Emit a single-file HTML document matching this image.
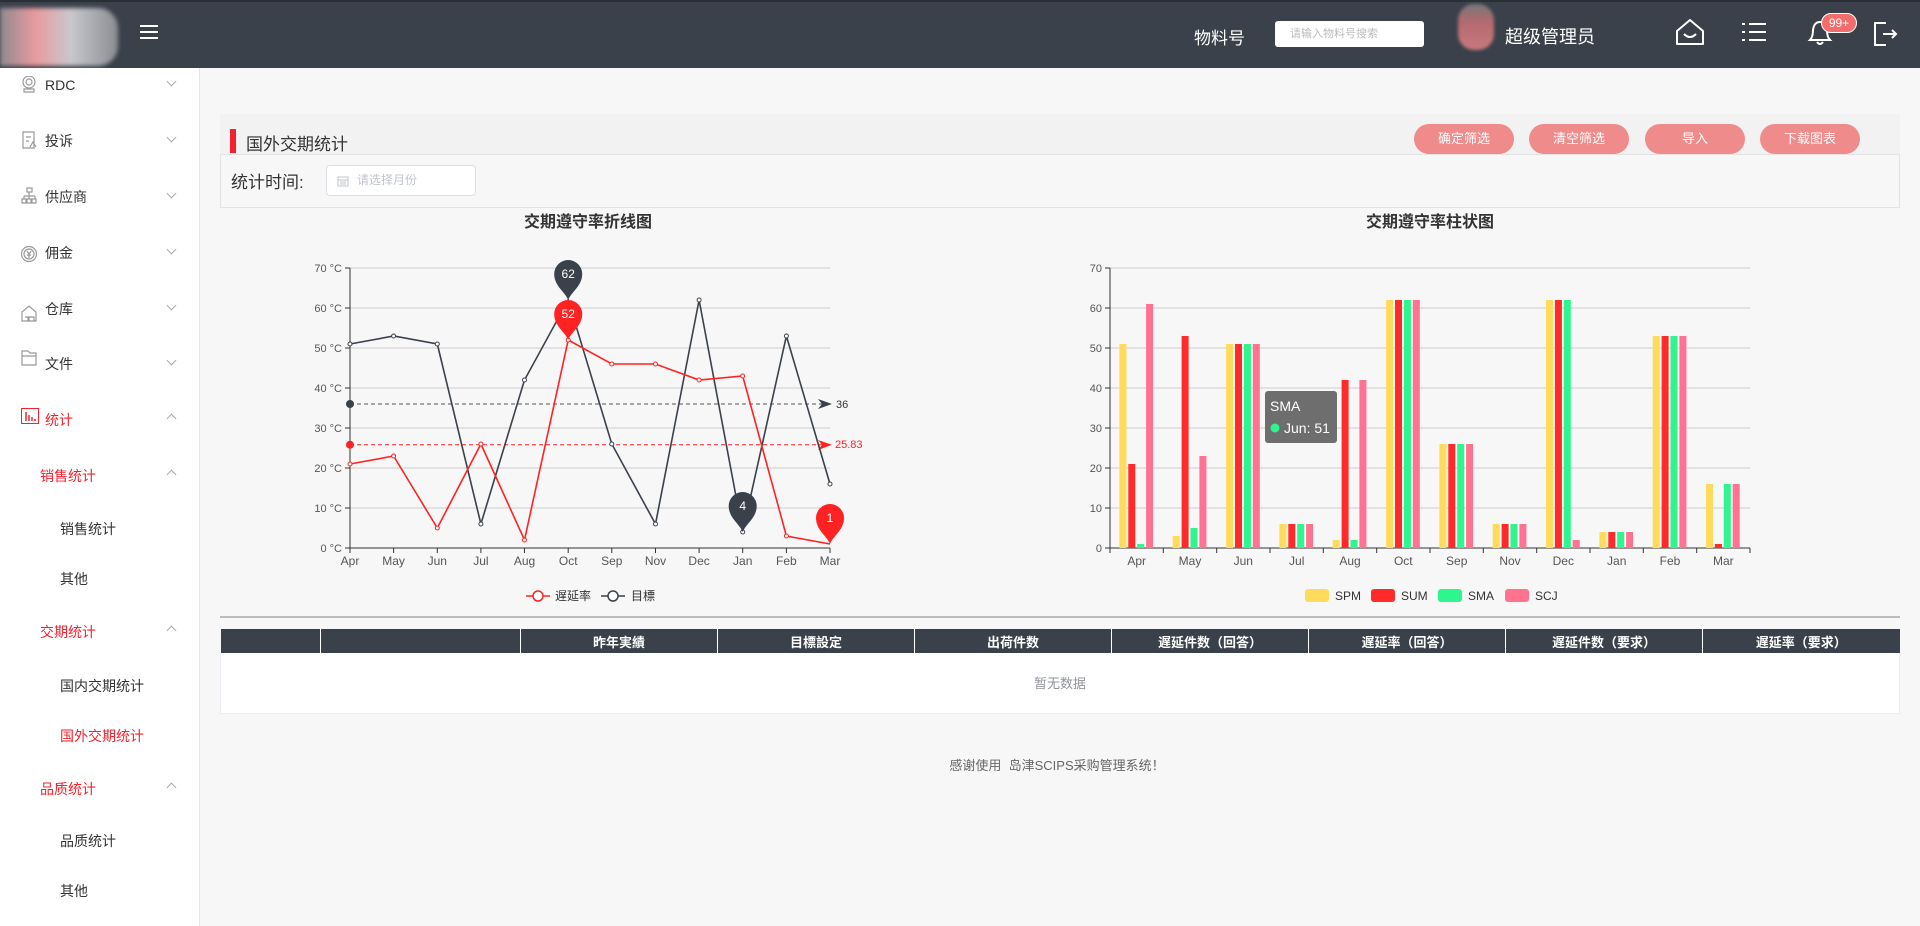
<!DOCTYPE html>
<html><head><meta charset="utf-8"><style>
*{margin:0;padding:0;box-sizing:border-box}
body{width:1920px;height:926px;overflow:hidden;background:#f7f7f7;font-family:"Liberation Sans","Noto Sans CJK SC",sans-serif;position:relative;color:#333}
.a{position:absolute}
.hdr{left:0;top:0;width:1920px;height:68px;background:#3a414b;border-top:2px solid #2a2f36}
.side{left:0;top:68px;width:200px;height:858px;background:#fff;border-right:1px solid #e6e6e6}
.si{position:absolute;font-size:14px;line-height:20px;white-space:nowrap}
.chev{position:absolute;left:168px;width:7px;height:7px;border-right:1px solid #aaa;border-bottom:1px solid #aaa;transform:rotate(45deg)}
.chev.up{transform:rotate(225deg)}
.btn{top:124px;width:100px;height:30px;border-radius:15px;background:#f08b8b;color:#fff;font-size:13px;text-align:center;line-height:30px}
th{background:#3a414b;color:#fff;font-size:13px;font-weight:bold;height:24px;border-left:1px solid #fff}
</style></head><body>
<div class="a hdr"></div>
<div class="a" style="left:0;top:8px;width:118px;height:58px;background:linear-gradient(90deg,#8f8a8e,#e89a9f 30%,#c8c8cc 60%,#8a8d92);border-radius:0 20px 20px 0;filter:blur(2px)"></div>
<div class="a" style="left:140px;top:25px;width:18px;height:2px;background:#fff;box-shadow:0 6px 0 #fff,0 12px 0 #fff"></div>
<div class="a" style="left:1194px;top:24px;color:#fff;font-size:17px">物料号</div>
<div class="a" style="left:1275px;top:21px;width:149px;height:26px;background:#fff;border-radius:3px;font-size:11px;color:#bbb;line-height:26px;padding-left:15px">请输入物料号搜索</div>
<div class="a" style="left:1458px;top:4px;width:36px;height:46px;border-radius:16px;background:linear-gradient(180deg,#777,#b46a70 40%,#c87a7e);filter:blur(1.5px)"></div>
<div class="a" style="left:1505px;top:23px;color:#fff;font-size:18px">超级管理员</div>
<svg class="a" style="left:1670px;top:14px" width="240" height="40" viewBox="1670 14 240 40" fill="none" stroke="#fff" stroke-width="2">
<path d="M1677 31 L1690 20 L1703 31 V44 H1677 Z" stroke-linejoin="round"/><path d="M1684 34 Q1690 40 1696 34"/>
<path d="M1742 24h3M1749 24h17M1742 32h3M1749 32h17M1742 40h3M1749 40h17"/>
<path d="M1810 40 Q1813 37 1813 30 Q1814 22 1820 22 Q1826 22 1827 30 Q1827 37 1830 40 Z M1817 42 Q1820 46 1823 42"/>
<path d="M1886 23 H1875 V45 H1886 M1883 34 H1896 M1892 30 L1896 34 L1892 38"/>
</svg>
<div class="a" style="left:1821px;top:13px;width:36px;height:20px;border-radius:10px;background:#f56c6c;border:1px solid #fff;color:#fff;font-size:12px;text-align:center;line-height:18px">99+</div>

<div class="a side">
<svg class="a" style="left:21px;top:8px" width="16" height="300" fill="none" stroke="#999" stroke-width="1.2">
<circle cx="8" cy="6" r="6"/><circle cx="8" cy="6" r="3"/><path d="M3 13h10v3H3z"/>
<path d="M2 56h11v16H2z M5 61h5 M5 65h3 M9 71l3-5 3 5"/>
<path d="M6 112h5v4H6z M8 116v4 M3 120h11 M3 120v3 M8 120v3 M14 120v3 M1 123h4v4H1z M6 123h4v4H6z M11 123h4v4h-4z"/>
<circle cx="8" cy="178" r="7.5"/><circle cx="8" cy="178" r="5"/><path d="M6 175l2 3 2-3M8 178v4M6 179h4"/>
<path d="M1 245v-9l7-6 7 6v9z M8 241h5v4h-5z M4 241h3v4"/>
<path d="M1 289v-14h6l2 2h6v12z M1 280h14"/>
</svg>
<svg class="a" style="left:21px;top:340px" width="18" height="16"><rect x=".5" y=".5" width="17" height="15" fill="none" stroke="#f5222d"/><path d="M5 4v9M8 7v6M11 9v4M14 11v2" stroke="#f5222d" stroke-width="1.5"/></svg>
<div class="si" style="left:45px;top:7px">RDC</div><div class="chev" style="top:10px"></div>
<div class="si" style="left:45px;top:63px">投诉</div><div class="chev" style="top:66px"></div>
<div class="si" style="left:45px;top:119px">供应商</div><div class="chev" style="top:122px"></div>
<div class="si" style="left:45px;top:175px">佣金</div><div class="chev" style="top:178px"></div>
<div class="si" style="left:45px;top:231px">仓库</div><div class="chev" style="top:234px"></div>
<div class="si" style="left:45px;top:286px">文件</div><div class="chev" style="top:289px"></div>
<div class="si" style="left:45px;top:342px;color:#f5222d">统计</div><div class="chev up" style="top:347px"></div>
<div class="si" style="left:40px;top:398px;color:#f5222d">销售统计</div><div class="chev up" style="top:403px"></div>
<div class="si" style="left:60px;top:451px">销售统计</div>
<div class="si" style="left:60px;top:501px">其他</div>
<div class="si" style="left:40px;top:554px;color:#f5222d">交期统计</div><div class="chev up" style="top:559px"></div>
<div class="si" style="left:60px;top:608px">国内交期统计</div>
<div class="si" style="left:60px;top:658px;color:#f5222d">国外交期统计</div>
<div class="si" style="left:40px;top:711px;color:#f5222d">品质统计</div><div class="chev up" style="top:716px"></div>
<div class="si" style="left:60px;top:763px">品质统计</div>
<div class="si" style="left:60px;top:813px">其他</div>
</div>

<div class="a" style="left:220px;top:114px;width:1680px;height:40px;background:#f2f2f2"></div>
<div class="a" style="left:230px;top:129px;width:6px;height:24px;background:#f5222d"></div>
<div class="a" style="left:246px;top:130px;font-size:17px">国外交期统计</div>
<div class="a btn" style="left:1414px">确定筛选</div>
<div class="a btn" style="left:1529px">清空筛选</div>
<div class="a btn" style="left:1645px">导入</div>
<div class="a btn" style="left:1760px">下载图表</div>
<div class="a" style="left:220px;top:154px;width:1680px;height:54px;border:1px solid #e3e3e3;background:#f7f7f7"></div>
<div class="a" style="left:231px;top:168px;font-size:17px">统计时间:</div>
<div class="a" style="left:326px;top:165px;width:150px;height:31px;border:1px solid #dcdfe6;border-radius:4px;background:#fff;font-size:12px;color:#c0c4cc;line-height:29px;padding-left:30px">请选择月份</div>
<svg class="a" style="left:337px;top:175px" width="12" height="12"><rect x="1" y="2" width="10" height="9" fill="none" stroke="#c0c4cc"/><path d="M1 5h10M3 7h6M3 9h6" stroke="#c0c4cc"/></svg>

<svg class="a" style="left:0;top:0" width="1920" height="926" viewBox="0 0 1920 926" font-family="Liberation Sans, Noto Sans CJK SC, sans-serif">
<text x="588" y="227" text-anchor="middle" font-size="16" font-weight="bold" fill="#333">交期遵守率折线图</text>
<text x="1430" y="227" text-anchor="middle" font-size="16" font-weight="bold" fill="#333">交期遵守率柱状图</text>
<g stroke="#ccc" stroke-width="1" fill="none">
<path d="M350 268H830M350 308H830M350 348H830M350 388H830M350 428H830M350 468H830M350 508H830"/>
<path d="M1110 268H1750M1110 308H1750M1110 348H1750M1110 388H1750M1110 428H1750M1110 468H1750M1110 508H1750"/>
</g>
<g stroke="#333" stroke-width="1" fill="none">
<path d="M350 268V548H830M345 268h5M345 308h5M345 348h5M345 388h5M345 428h5M345 468h5M345 508h5M345 548h5"/>
<path d="M350 548v5M393.6 548v5M437.3 548v5M480.9 548v5M524.5 548v5M568.2 548v5M611.8 548v5M655.5 548v5M699.1 548v5M742.7 548v5M786.4 548v5M830 548v5"/>
<path d="M1110 268V548H1750M1105 268h5M1105 308h5M1105 348h5M1105 388h5M1105 428h5M1105 468h5M1105 508h5M1105 548h5"/>
<path d="M1110 548v5M1163.3 548v5M1216.7 548v5M1270 548v5M1323.3 548v5M1376.7 548v5M1430 548v5M1483.3 548v5M1536.7 548v5M1590 548v5M1643.3 548v5M1696.7 548v5M1750 548v5"/>
</g>
<g font-size="11" fill="#555" text-anchor="end">
<text x="342" y="272">70 °C</text><text x="342" y="312">60 °C</text><text x="342" y="352">50 °C</text><text x="342" y="392">40 °C</text><text x="342" y="432">30 °C</text><text x="342" y="472">20 °C</text><text x="342" y="512">10 °C</text><text x="342" y="552">0 °C</text>
<text x="1102" y="272">70</text><text x="1102" y="312">60</text><text x="1102" y="352">50</text><text x="1102" y="392">40</text><text x="1102" y="432">30</text><text x="1102" y="472">20</text><text x="1102" y="512">10</text><text x="1102" y="552">0</text>
</g>
<g font-size="12" fill="#555" text-anchor="middle">
<text x="350" y="565">Apr</text><text x="393.6" y="565">May</text><text x="437.3" y="565">Jun</text><text x="480.9" y="565">Jul</text><text x="524.5" y="565">Aug</text><text x="568.2" y="565">Oct</text><text x="611.8" y="565">Sep</text><text x="655.5" y="565">Nov</text><text x="699.1" y="565">Dec</text><text x="742.7" y="565">Jan</text><text x="786.4" y="565">Feb</text><text x="830" y="565">Mar</text>
<text x="1136.7" y="565">Apr</text><text x="1190" y="565">May</text><text x="1243.3" y="565">Jun</text><text x="1296.7" y="565">Jul</text><text x="1350" y="565">Aug</text><text x="1403.3" y="565">Oct</text><text x="1456.7" y="565">Sep</text><text x="1510" y="565">Nov</text><text x="1563.3" y="565">Dec</text><text x="1616.7" y="565">Jan</text><text x="1670" y="565">Feb</text><text x="1723.3" y="565">Mar</text>
</g>
<path d="M350 404H822" stroke="#555" stroke-dasharray="4,3"/>
<path d="M350 444.7H822" stroke="#f22" stroke-dasharray="4,3"/>
<circle cx="350" cy="404" r="4" fill="#3a414b"/><circle cx="350" cy="444.7" r="4" fill="#f22"/>
<path d="M818 399L832 404L818 409L822 404Z" fill="#3a414b"/><path d="M818 440L832 444.7L818 450L822 444.7Z" fill="#f22"/>
<text x="836" y="408" font-size="11" fill="#333">36</text><text x="835" y="448" font-size="11" fill="#f22">25.83</text>
<polyline fill="none" stroke="#3a414b" stroke-width="1.6" points="350,344 393.6,336 437.3,344 480.9,524 524.5,380 568.2,300 611.8,444 655.5,524 699.1,300 742.7,532 786.4,336 830,484"/>
<polyline fill="none" stroke="#f22" stroke-width="1.6" points="350,464 393.6,456 437.3,528 480.9,444 524.5,540 568.2,340 611.8,364 655.5,364 699.1,380 742.7,376 786.4,536 830,544"/>
<g fill="#fff" stroke="#3a414b" stroke-width="1"><circle cx="350" cy="344" r="2"/><circle cx="393.6" cy="336" r="2"/><circle cx="437.3" cy="344" r="2"/><circle cx="480.9" cy="524" r="2"/><circle cx="524.5" cy="380" r="2"/><circle cx="611.8" cy="444" r="2"/><circle cx="655.5" cy="524" r="2"/><circle cx="699.1" cy="300" r="2"/><circle cx="742.7" cy="532" r="2"/><circle cx="786.4" cy="336" r="2"/><circle cx="830" cy="484" r="2"/></g>
<g fill="#fff" stroke="#f22" stroke-width="1"><circle cx="350" cy="464" r="2"/><circle cx="393.6" cy="456" r="2"/><circle cx="437.3" cy="528" r="2"/><circle cx="480.9" cy="444" r="2"/><circle cx="524.5" cy="540" r="2"/><circle cx="568.2" cy="340" r="2"/><circle cx="611.8" cy="364" r="2"/><circle cx="655.5" cy="364" r="2"/><circle cx="699.1" cy="380" r="2"/><circle cx="742.7" cy="376" r="2"/><circle cx="786.4" cy="536" r="2"/></g>
<g font-size="12" fill="#fff" text-anchor="middle">
<path transform="translate(568.2,300)" d="M0 0C-3 -8 -14 -14 -14 -26A14 14 0 1 1 14 -26C14 -14 3 -8 0 0Z" fill="#3a414b"/><text x="568.2" y="278">62</text>
<path transform="translate(568.2,340)" d="M0 0C-3 -8 -14 -14 -14 -26A14 14 0 1 1 14 -26C14 -14 3 -8 0 0Z" fill="#f22"/><text x="568.2" y="318">52</text>
<path transform="translate(742.7,532)" d="M0 0C-3 -8 -14 -14 -14 -26A14 14 0 1 1 14 -26C14 -14 3 -8 0 0Z" fill="#3a414b"/><text x="742.7" y="510">4</text>
<path transform="translate(830,544)" d="M0 0C-3 -8 -14 -14 -14 -26A14 14 0 1 1 14 -26C14 -14 3 -8 0 0Z" fill="#f22"/><text x="830" y="522">1</text>
</g>
<path d="M526 596H550" stroke="#f22" stroke-width="1.5"/><circle cx="538" cy="596" r="5" fill="#fff" stroke="#f22" stroke-width="1.5"/>
<text x="555" y="600" font-size="12" fill="#333">遅延率</text>
<path d="M601 596H625" stroke="#3a414b" stroke-width="1.5"/><circle cx="613" cy="596" r="5" fill="#fff" stroke="#3a414b" stroke-width="1.5"/>
<text x="631" y="600" font-size="12" fill="#333">目標</text>
<g>
<g transform="translate(1119.4,0)"><rect x="0" y="344" width="7" height="204" fill="#ffdb5c"/><rect x="8.9" y="464" width="7" height="84" fill="#ff2a2a"/><rect x="17.8" y="544" width="7" height="4" fill="#2ef58e"/><rect x="26.7" y="304" width="7" height="244" fill="#ff7290"/></g>
<g transform="translate(1172.7,0)"><rect x="0" y="536" width="7" height="12" fill="#ffdb5c"/><rect x="8.9" y="336" width="7" height="212" fill="#ff2a2a"/><rect x="17.8" y="528" width="7" height="20" fill="#2ef58e"/><rect x="26.7" y="456" width="7" height="92" fill="#ff7290"/></g>
<g transform="translate(1226.1,0)"><rect x="0" y="344" width="7" height="204" fill="#ffdb5c"/><rect x="8.9" y="344" width="7" height="204" fill="#ff2a2a"/><rect x="17.8" y="344" width="7" height="204" fill="#2ef58e"/><rect x="26.7" y="344" width="7" height="204" fill="#ff7290"/></g>
<g transform="translate(1279.4,0)"><rect x="0" y="524" width="7" height="24" fill="#ffdb5c"/><rect x="8.9" y="524" width="7" height="24" fill="#ff2a2a"/><rect x="17.8" y="524" width="7" height="24" fill="#2ef58e"/><rect x="26.7" y="524" width="7" height="24" fill="#ff7290"/></g>
<g transform="translate(1332.7,0)"><rect x="0" y="540" width="7" height="8" fill="#ffdb5c"/><rect x="8.9" y="380" width="7" height="168" fill="#ff2a2a"/><rect x="17.8" y="540" width="7" height="8" fill="#2ef58e"/><rect x="26.7" y="380" width="7" height="168" fill="#ff7290"/></g>
<g transform="translate(1386.1,0)"><rect x="0" y="300" width="7" height="248" fill="#ffdb5c"/><rect x="8.9" y="300" width="7" height="248" fill="#ff2a2a"/><rect x="17.8" y="300" width="7" height="248" fill="#2ef58e"/><rect x="26.7" y="300" width="7" height="248" fill="#ff7290"/></g>
<g transform="translate(1439.4,0)"><rect x="0" y="444" width="7" height="104" fill="#ffdb5c"/><rect x="8.9" y="444" width="7" height="104" fill="#ff2a2a"/><rect x="17.8" y="444" width="7" height="104" fill="#2ef58e"/><rect x="26.7" y="444" width="7" height="104" fill="#ff7290"/></g>
<g transform="translate(1492.7,0)"><rect x="0" y="524" width="7" height="24" fill="#ffdb5c"/><rect x="8.9" y="524" width="7" height="24" fill="#ff2a2a"/><rect x="17.8" y="524" width="7" height="24" fill="#2ef58e"/><rect x="26.7" y="524" width="7" height="24" fill="#ff7290"/></g>
<g transform="translate(1546,0)"><rect x="0" y="300" width="7" height="248" fill="#ffdb5c"/><rect x="8.9" y="300" width="7" height="248" fill="#ff2a2a"/><rect x="17.8" y="300" width="7" height="248" fill="#2ef58e"/><rect x="26.7" y="540" width="7" height="8" fill="#ff7290"/></g>
<g transform="translate(1599.4,0)"><rect x="0" y="532" width="7" height="16" fill="#ffdb5c"/><rect x="8.9" y="532" width="7" height="16" fill="#ff2a2a"/><rect x="17.8" y="532" width="7" height="16" fill="#2ef58e"/><rect x="26.7" y="532" width="7" height="16" fill="#ff7290"/></g>
<g transform="translate(1652.7,0)"><rect x="0" y="336" width="7" height="212" fill="#ffdb5c"/><rect x="8.9" y="336" width="7" height="212" fill="#ff2a2a"/><rect x="17.8" y="336" width="7" height="212" fill="#2ef58e"/><rect x="26.7" y="336" width="7" height="212" fill="#ff7290"/></g>
<g transform="translate(1706,0)"><rect x="0" y="484" width="7" height="64" fill="#ffdb5c"/><rect x="8.9" y="544" width="7" height="4" fill="#ff2a2a"/><rect x="17.8" y="484" width="7" height="64" fill="#2ef58e"/><rect x="26.7" y="484" width="7" height="64" fill="#ff7290"/></g>
</g>
<rect x="1265" y="391" width="72" height="52" rx="3" fill="#666" opacity=".95"/>
<text x="1270" y="411" font-size="14" fill="#fff">SMA</text>
<circle cx="1275" cy="428" r="4.5" fill="#2ef58e"/><text x="1284" y="433" font-size="14" fill="#fff">Jun: 51</text>
<rect x="1305" y="589" width="24" height="13" rx="3" fill="#ffdb5c"/><text x="1335" y="600" font-size="12" fill="#333">SPM</text>
<rect x="1371" y="589" width="24" height="13" rx="3" fill="#ff2a2a"/><text x="1401" y="600" font-size="12" fill="#333">SUM</text>
<rect x="1438" y="589" width="24" height="13" rx="3" fill="#2ef58e"/><text x="1468" y="600" font-size="12" fill="#333">SMA</text>
<rect x="1505" y="589" width="24" height="13" rx="3" fill="#ff7290"/><text x="1535" y="600" font-size="12" fill="#333">SCJ</text>
<path d="M220 617H1900" stroke="#a8a8a8" stroke-width="1.5"/>
</svg>

<table class="a" style="left:220px;top:629px;width:1680px;border-collapse:collapse;table-layout:fixed;font-family:'Liberation Sans','Noto Sans CJK SC',sans-serif">
<colgroup><col style="width:100px"><col style="width:200px"><col><col><col><col><col><col><col></colgroup>
<tr><th style="border-left:none"></th><th></th><th>昨年実績</th><th>目標設定</th><th>出荷件数</th><th>遅延件数（回答）</th><th>遅延率（回答）</th><th>遅延件数（要求）</th><th>遅延率（要求）</th></tr>
<tr><td colspan="9" style="height:60px;background:#fff;border:1px solid #ebeef5;border-top:none;text-align:center;font-size:13px;color:#909399">暂无数据</td></tr>
</table>
<div class="a" style="left:0;width:2114px;top:755px;text-align:center;font-size:13px;color:#666">感谢使用&nbsp; 岛津SCIPS采购管理系统！</div>
</body></html>
